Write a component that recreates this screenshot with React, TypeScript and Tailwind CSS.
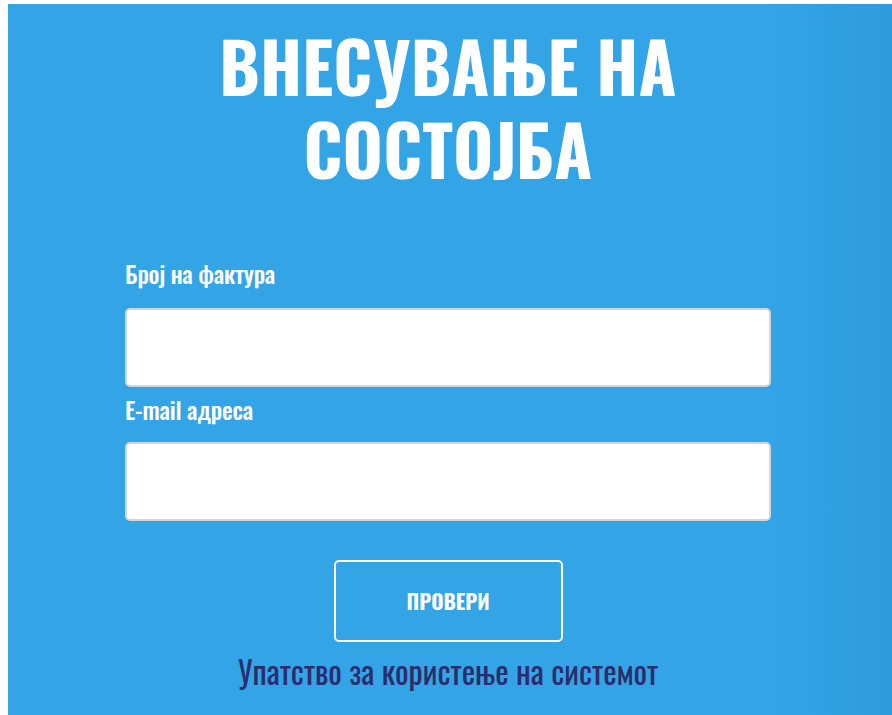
import { useState } from "react"

const condensed = "font-['Oswald','Liberation_Sans_Narrow','DejaVu_Sans_Condensed','Roboto',sans-serif]"

export default function App() {
  const [form, setForm] = useState({ invoice: "", email: "" })

  return (
    <div className="min-h-screen bg-white pl-2 pt-1">
      <div className="flex min-h-[711px] flex-col items-center bg-[linear-gradient(90deg,#33a5e7_0%,#33a5e7_86%,#2e9bdc_100%)] pr-1">
        {/* Title */}
        <h1
          className={`${condensed} mt-[20px] text-center text-[69px] font-bold uppercase leading-[83px] tracking-[0.2px] text-white`}
        >
          Внесување на
          <br />
          состојба
        </h1>

        <form className={`${condensed} mt-[67px] flex w-[646px] flex-col`} onSubmit={(e) => e.preventDefault()}>
          <label className="text-[24px] font-medium leading-[32px] tracking-[-0.2px] text-white">Број на фактура</label>
          <input
            value={form.invoice}
            onChange={(e) => setForm({ ...form, invoice: e.target.value })}
            className="mt-[19px] h-[79px] rounded-[5px] border-2 border-[#cfd5da] bg-white px-4 outline-none"
          />

          <label className="mt-[6px] text-[24px] font-medium leading-[32px] tracking-[-0.2px] text-white">
            E-mail адреса
          </label>
          <input
            value={form.email}
            onChange={(e) => setForm({ ...form, email: e.target.value })}
            className="mt-[17px] h-[79px] rounded-[5px] border-2 border-[#cfd5da] bg-white px-4 outline-none"
          />

          <button
            type="submit"
            className="mx-auto mt-[39px] h-[82px] w-[229px] rounded-[5px] border-2 border-white text-[21px] font-bold uppercase text-white"
          >
            Провери
          </button>

          <a href="#" className="mt-[8px] text-center text-[32px] leading-[42px] text-[#2b2e6e]">
            Упатство за користење на системот
          </a>
        </form>
      </div>
    </div>
  )
}
